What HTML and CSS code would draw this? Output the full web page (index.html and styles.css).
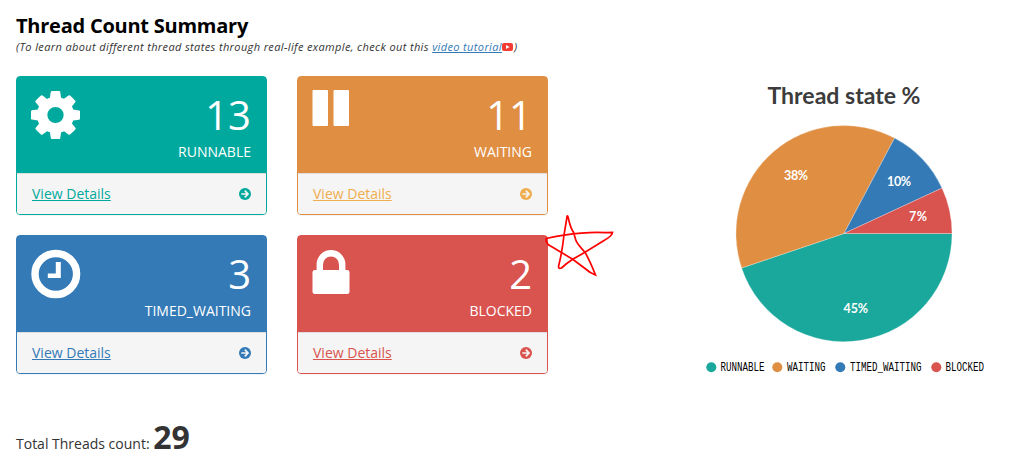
FILE: index.html
```
<!doctype html>
<html lang="en">
<head>
	<meta charset="UTF-8">
	<title>Thread Count Summary</title>
	<link rel="stylesheet" href="styles.css">
</head>
<body>
<svg class="defs">
	<symbol id="arrow" viewBox="0 0 12 12">
		<circle cx="6" cy="6" r="6" fill="currentColor"/>
		<path d="M2.3 6H8.8M5.8 2.7L9 6L5.8 9.3" fill="none" stroke="#f5f5f5" stroke-width="1.7"/>
	</symbol>
</svg>
<div class="page">
	<div class="summary">
		<h1 class="title">Thread Count Summary</h1>
		<div class="hint">(To learn about different thread states through real-life example, check out this <a class="video" href="#">video tutorial</a><svg class="youtube" viewBox="0 0 11 8"><rect width="11" height="8" rx="2" fill="#f43b33"/><path d="M4 2v4l3.6-2z" fill="#fff"/></svg>)</div>
		<div class="cards">
			<div class="card runnable">
				<div class="card-head">
					<svg class="icon" viewBox="128 128 1536 1536" preserveAspectRatio="none"><path fill="#fff" d="M1152 896q0-106-75-181t-181-75-181 75-75 181 75 181 181 75 181-75 75-181zm512-109v222q0 12-8 23t-20 13l-185 28q-19 54-39 91 35 50 107 138 10 12 10 25t-9 23q-27 37-99 108t-94 71q-12 0-26-9l-138-108q-44 23-91 38-16 136-29 186-7 28-36 28h-222q-14 0-24.5-8.5t-11.5-21.5l-28-184q-49-16-90-37l-141 107q-10 9-25 9-14 0-25-11-126-114-165-168-7-10-7-23 0-12 8-23 15-21 51-66.5t54-70.5q-27-50-41-99l-183-27q-13-2-21-12.5t-8-23.5v-222q0-12 8-23t19-13l186-28q14-46 39-92-40-57-107-138-10-12-10-24 0-10 9-23 26-36 98.5-107.5t94.5-71.5q13 0 26 10l138 107q44-23 91-38 16-136 29-186 7-28 36-28h222q14 0 24.5 8.5t11.5 21.5l28 184q49 16 90 37l142-107q9-9 24-9 13 0 25 10 129 119 165 170 7 8 7 22 0 12-8 23-15 21-51 66.5t-54 70.5q26 50 41 98l183 28q13 2 21 12.5t8 23.5z"/></svg>
					<div class="count">
						<div class="num">13</div>
						<div class="state">RUNNABLE</div>
					</div>
				</div>
				<div class="card-foot"><a href="#">View Details</a><svg class="arrow"><use href="#arrow"/></svg></div>
			</div>
			<div class="card waiting">
				<div class="card-head">
					<svg class="icon" viewBox="0 0 49 48" fill="#fff"><rect x=".5" y="-1" width="15.5" height="36" rx="1"/><rect x="21.500" y="-1" width="15.5" height="36" rx="1"/></svg>
					<div class="count">
						<div class="num">11</div>
						<div class="state">WAITING</div>
					</div>
				</div>
				<div class="card-foot"><a href="#">View Details</a><svg class="arrow"><use href="#arrow"/></svg></div>
			</div>
			<div class="card timed">
				<div class="card-head">
					<svg class="icon" viewBox="0 0 49 48"><ellipse cx="24.8" cy="24" rx="20.8" ry="20.5" fill="none" stroke="#fff" stroke-width="7.4"/><path d="M24.800 12h5v16h-13v-4.500h8z" fill="#fff"/></svg>
					<div class="count">
						<div class="num">3</div>
						<div class="state">TIMED_WAITING</div>
					</div>
				</div>
				<div class="card-foot"><a href="#">View Details</a><svg class="arrow"><use href="#arrow"/></svg></div>
			</div>
			<div class="card blocked">
				<div class="card-head">
					<svg class="icon" viewBox="0 0 49 48"><rect x=".5" y="20" width="37" height="24" rx="2.3" fill="#fff"/><path d="M7.800 21v-6.500a11.200 11.200 0 0 1 22.400 0V21" fill="none" stroke="#fff" stroke-width="6.4"/></svg>
					<div class="count">
						<div class="num">2</div>
						<div class="state">BLOCKED</div>
					</div>
				</div>
				<div class="card-foot"><a href="#">View Details</a><svg class="arrow"><use href="#arrow"/></svg></div>
				<!-- hand drawn star -->
				<svg class="star" viewBox="544 213 72 66"><path d="M546 238.500Q555 236.500 564 235.200Q588 231.500 606 232.700L612.500 232.500Q612 236 604 240.500L585 252.300L572.700 259.300Q567 263 561.500 268Q558 269.500 558.700 265.500Q562 253 564 235L567 217Q567.500 213.500 569 221Q571 229 573.300 231.700L576 240.700Q578 245 585 252.300Q590 261 595.500 275Q590 273 585 268.500Q579 264 572.700 259.300Q559 251 548 244.500Q545.500 241 546 238.500"/></svg>
			</div>
		</div>
		<div class="total">Total Threads count: <span class="total-num">29</span></div>
	</div>
	<div class="chart">
		<svg width="300" height="310" viewBox="695 75 300 310">
			<text class="chart-title" x="767.500" y="104" textLength="153" lengthAdjust="spacingAndGlyphs">Thread state %</text>
			<g stroke="#fff" stroke-opacity=".45" stroke-width=".6">
				<path fill="#1ba89c" d="M844 233.500H952A108 108 0 0 1 741.600 268z"/>
				<path fill="#e08e41" d="M844 233.500L741.600 268A108 108 0 0 1 894.600 138.100z"/>
				<path fill="#347ab6" d="M844 233.500L894.600 138.100A108 108 0 0 1 942 188.100z"/>
				<path fill="#d9534f" d="M844 233.500L942 188.100A108 108 0 0 1 952 233.500z"/>
			</g>
			<g class="percent">
				<text x="784" y="180" textLength="24">38%</text>
				<text x="887" y="186" textLength="24">10%</text>
				<text x="909" y="221" textLength="18">7%</text>
				<text x="843.500" y="313" textLength="24.500">45%</text>
			</g>
			<circle cx="711.300" cy="367.300" r="5" fill="#1ba89c"/>
			<circle cx="777.300" cy="367.300" r="5" fill="#e08e41"/>
			<circle cx="840.300" cy="367.300" r="5" fill="#347ab6"/>
			<circle cx="936.300" cy="367.300" r="5" fill="#d9534f"/>
			<g class="legend">
				<text x="720.500" y="371" textLength="44" lengthAdjust="spacingAndGlyphs">RUNNABLE</text>
				<text x="787" y="371" textLength="38.500" lengthAdjust="spacingAndGlyphs">WAITING</text>
				<text x="850" y="371" textLength="71.500" lengthAdjust="spacingAndGlyphs">TIMED_WAITING</text>
				<text x="945.500" y="371" textLength="38.500" lengthAdjust="spacingAndGlyphs">BLOCKED</text>
			</g>
		</svg>
	</div>
</div>
</body>
</html>
```
FILE: styles.css
```
*{
	box-sizing:border-box;
}
body{
	margin:0;
	background-color: #fff;
	color:#333;
	font-family: "Open Sans", "Noto Sans", sans-serif;
	font-size: 14px;
	line-height: 20px;
}
.defs{
	display:none;
}
.page{
	display:flex;
	padding-left:16px;
}
.summary{
	width:532px;
	padding-top:12px;
}
.title{
	margin:0;
	color:#000;
	font-size: 20px;
	font-weight: 700;
	letter-spacing: -.24px;
	line-height: 28px;
	white-space: nowrap;
}
.hint{
	height:36px;
	font-size: 11px;
	font-style: italic;
	letter-spacing: .375px;
	line-height: 14px;
	white-space: nowrap;
}
.video{
	color:#337ab7;
}
.youtube{
	width:11px;
	height:8px;
	margin:0 1px 0 0;
}

/*cards*/
.cards{
	display:grid;
	grid-template-columns: 251px 251px;
	gap:20px 30px;
}
.card{
	position:relative;
	height:139px;
	border:1px solid;
	border-radius: 4px;
	box-shadow: 0 1px 1px rgba(0,0,0,.05);
}
.card-head{
	display:flex;
	justify-content: space-between;
	height:96px;
	padding:14px 15px 0 14px;
	background-color: currentColor;
}
.icon{
	width:49px;
	height:48px;
	overflow:visible;
}
.count{
	text-align: right;
}
.num,
.state{
	color:#fff;
}
.num{
	font-size: 40px;
	line-height: 48px;
}
.state{
	line-height: 26px;
}
.card-foot{
	display:flex;
	justify-content: space-between;
	align-items: center;
	height:41px;
	padding:0 15px;
	border-top:1px solid #ddd;
	border-radius: 0 0 3px 3px;
	background-color: #f5f5f5;
}
.card-foot a{
	color:inherit;
}
.arrow{
	width:12px;
	height:12px;
}
.runnable{
	color:#00a99d;
}
.waiting{
	color:#e08e41;
}
.waiting .card-foot{
	color:#f0ad4e;
}
.timed{
	color:#337ab7;
}
.blocked{
	color:#d9534f;
}
.star{
	position:absolute;
	left:246px;
	top:-23px;
	width:72px;
	height:66px;
	fill:none;
	stroke:#f00;
	stroke-width:1.7;
}
.total{
	margin-top:45px;
	line-height: 36px;
}
.total-num{
	font-size: 32px;
	font-weight: 700;
}

/*chart*/
.chart{
	padding:75px 0 0 147px;
}
.chart svg{
	display:block;
}
.chart-title{
	fill:#3c3c3c;
	font:700 23px Lato, sans-serif;
}
.percent{
	fill:#fff;
	font:700 12.5px Lato, sans-serif;
}
.legend{
	fill:#000;
	font:12px "Liberation Mono", monospace;
}
```
